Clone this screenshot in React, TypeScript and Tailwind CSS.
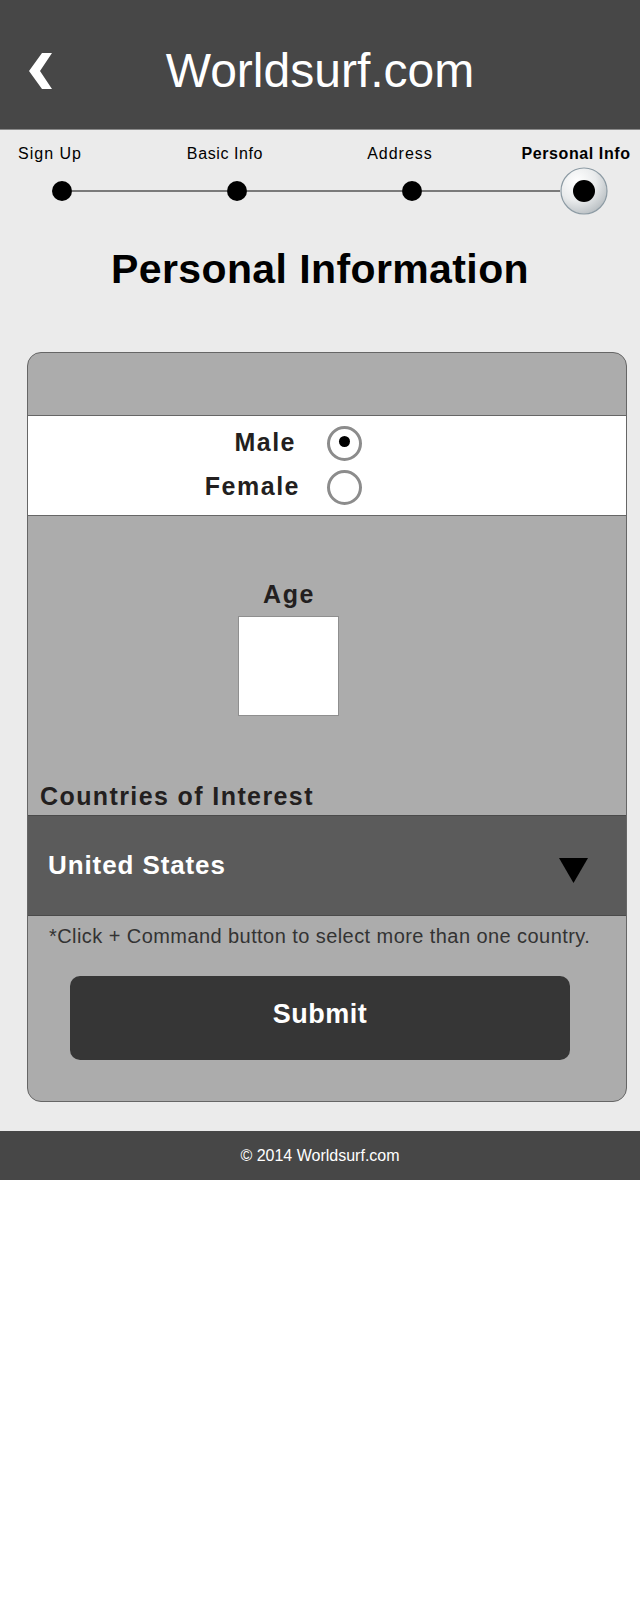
const steps = [
  { label: 'Sign Up', box: 'w-[100px] tracking-[1px]' },
  { label: 'Basic Info', box: 'ml-[50px] w-[150px] tracking-[0.6px]' },
  { label: 'Address', box: 'ml-[25px] w-[150px] tracking-[1px]' },
  { label: 'Personal Info', box: 'ml-[41px] w-[120px] font-bold tracking-[0.6px]' },
]

function Dot() {
  return <div className="h-[20px] w-[20px] shrink-0 rounded-full bg-black" />
}

function Line({ width }: { width: string }) {
  return <div className={`h-[2px] bg-[#7a7a7a] ${width}`} />
}

function CurrentStep() {
  return (
    <svg width="48" height="48" viewBox="0 0 48 48" className="shrink-0">
      <defs>
        <radialGradient id="gloss" cx="35%" cy="30%" r="75%">
          <stop offset="0%" stopColor="#ffffff" />
          <stop offset="55%" stopColor="#e9ebec" />
          <stop offset="100%" stopColor="#b9bfc3" />
        </radialGradient>
      </defs>
      <circle cx="24" cy="24" r="23" fill="url(#gloss)" stroke="#8d9ba4" strokeWidth="1.2" />
      <circle cx="24" cy="24" r="11" fill="#000" />
    </svg>
  )
}

function Radio({ checked }: { checked?: boolean }) {
  return (
    <div className="flex h-[35px] w-[35px] items-center justify-center rounded-full border-[3px] border-[#8c8c8c] bg-white">
      {checked && <div className="mb-[3px] h-[11px] w-[11px] rounded-full bg-black" />}
    </div>
  )
}

export default function App() {
  return (
    <div className="w-[640px] bg-white font-['Liberation_Sans',Arial,sans-serif]">
      <header className="grid h-[130px] grid-cols-[80px_1fr_80px] items-center border-b border-[#8a8a8a] bg-[#474747] pt-[12px]">
        <div className="pl-[29px]">
          <svg width="24" height="36" viewBox="0 0 24 36">
            <polygon points="13,0 23,0 11,18 23,36 13,36 0,18" fill="#fff" />
          </svg>
        </div>
        <h1 className="text-center text-[48px] leading-[52px] text-white">Worldsurf.com</h1>
        <div />
      </header>

      <main className="bg-[#ebebeb] pb-[29px]">
        <div className="pt-[15px]">
          <div className="flex text-[16px] leading-[18px] text-black">
            {steps.map((s) => (
              <div key={s.label} className={`text-center ${s.box}`}>
                {s.label}
              </div>
            ))}
          </div>
          <div className="mt-[4px] flex items-center pl-[52px]">
            <Dot />
            <Line width="w-[155px]" />
            <Dot />
            <Line width="w-[155px]" />
            <Dot />
            <Line width="w-[138px]" />
            <CurrentStep />
          </div>
        </div>

        <h2 className="mt-[34px] text-center text-[41px] font-bold leading-[41px] tracking-[0.4px] text-black">
          Personal Information
        </h2>

        <form className="ml-[27px] mt-[62px] w-[600px] overflow-hidden rounded-[14px] border border-[#666] bg-[#acacac]">
          <div className="h-[62px]" />

          <div className="border-y border-[#666] bg-white pb-[6px] pt-[5px]">
            <div className="flex h-[44px] items-center">
              <span className="w-[268px] text-right text-[25px] font-bold tracking-[1.5px] text-[#231f20]">Male</span>
              <div className="ml-[31px]">
                <Radio checked />
              </div>
            </div>
            <div className="flex h-[44px] items-center">
              <span className="w-[272px] text-right text-[25px] font-bold tracking-[1.5px] text-[#231f20]">Female</span>
              <div className="ml-[27px]">
                <Radio />
              </div>
            </div>
          </div>

          <div className="ml-[210px] flex w-[101px] flex-col items-center pt-[66px]">
            <label className="pl-[1px] text-[25px] font-bold leading-[25px] tracking-[1.6px] text-[#231f20]">Age</label>
            <div className="mt-[9px] h-[100px] w-[101px] border border-[#8f8f8f] bg-white" />
          </div>

          <p className="mt-[68px] pl-[12px] text-[25px] font-bold leading-[25px] tracking-[1.4px] text-[#231f20]">
            Countries of Interest
          </p>

          <div className="mt-[6px] flex h-[101px] items-center justify-between border-y border-[#4a4a4a] bg-[#5b5b5b] pl-[20px] pr-[38px]">
            <span className="text-[26px] font-bold tracking-[0.9px] text-white">United States</span>
            <svg width="29" height="25" viewBox="0 0 29 25" className="mt-[10px]">
              <polygon points="0,0 29,0 14.5,25" fill="#000" />
            </svg>
          </div>

          <p className="mt-[10px] pl-[21px] text-[20px] leading-[20px] tracking-[0.43px] text-[#333]">
            *Click + Command button to select more than one country.
          </p>

          <div className="pb-[41px] pl-[42px] pt-[30px]">
            <button
              type="button"
              className="flex h-[84px] w-[500px] items-center justify-center rounded-[10px] bg-[#363636] pb-[8px] text-[27px] font-bold tracking-[0.5px] text-white"
            >
              Submit
            </button>
          </div>
        </form>
      </main>

      <footer className="flex h-[49px] items-center justify-center bg-[#474747] text-[16px] text-white">
        © 2014 Worldsurf.com
      </footer>
      <div className="h-[444px] bg-white" />
    </div>
  )
}
